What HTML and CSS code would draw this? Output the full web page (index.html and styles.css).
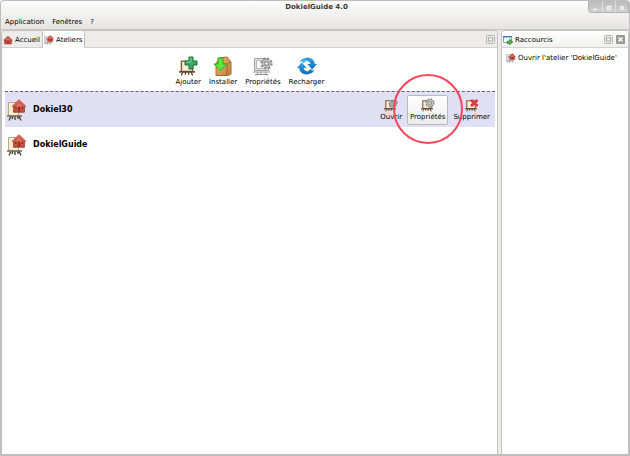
FILE: index.html
```html
<!DOCTYPE html>
<html lang="fr">
<head>
<meta charset="utf-8">
<title>DokielGuide 4.0</title>
<link rel="stylesheet" href="styles.css">
</head>
<body>
<svg class="defs" aria-hidden="true">
  <defs>
    <linearGradient id="roof" x1="0" y1="0" x2="0" y2="1"><stop offset="0" stop-color="#ef8672"/><stop offset="1" stop-color="#c4483a"/></linearGradient>
    <linearGradient id="wood" x1="0" y1="0" x2="1" y2="1"><stop offset="0" stop-color="#efbd74"/><stop offset="1" stop-color="#bd7c38"/></linearGradient>
    <linearGradient id="blue" x1="0" y1="0" x2="0" y2="1"><stop offset="0" stop-color="#35a5ea"/><stop offset="1" stop-color="#0d6db8"/></linearGradient>
  </defs>
  <symbol id="house" viewBox="0 0 20 18">
    <path d="M3 8v9h14V8l-7-6z" fill="url(#roof)" stroke="#9c3428"/>
    <path d="M1 9.500L10 1l9 8.500-2 1L10 4 3 10.500z" fill="#e2705d" stroke="#a23a2d" stroke-width=".8"/>
    <path d="M8.500 10h3v6h-3z" fill="#8e3026"/>
    <path d="M4.500 10h2.500v3H4.500zM13 10h2.500v3H13z" fill="#8e3026"/>
  </symbol>
  <symbol id="easel" viewBox="0 0 20 20">
    <path d="M5 15l-2 5M15 15l2 5M8 15v4M12 15v4" stroke="#54402f" stroke-width="1.500"/>
    <path d="M3 2h14v13H3z" fill="#f5efdc" stroke="#8b5a2e" stroke-width="1.800"/>
    <path d="M0 15.500h20" stroke="#66472b" stroke-width="2"/>
  </symbol>
  <symbol id="gear" viewBox="0 0 14 14">
    <g fill="none">
      <circle cx="7" cy="7" r="5.600" stroke="#858585" stroke-width="2" stroke-dasharray="2.200 2.198"/>
      <circle cx="7" cy="7" r="3.600" stroke="#858585" stroke-width="3"/>
      <circle cx="7" cy="7" r="3.600" stroke="#c4c4c4" stroke-width="1.600"/>
    </g>
    <circle cx="7" cy="7" r="1.800" fill="#f4f4f4" stroke="#777" stroke-width=".7"/>
  </symbol>
  <symbol id="workshop" viewBox="0 0 20 22">
    <path d="M4 17l-2 4.500M8 17v4M12 17l2 4.500M6 17l-1 3M11 17v3" stroke="#4b463d" stroke-width="1.400"/>
    <path d="M1.500 3.500h10V17h-10z" fill="#f8edcf" stroke="#b8a987"/>
    <path d="M0 17h15" stroke="#6c604e" stroke-width="1.400"/>
    <use href="#house" x="4" y="0" width="16" height="14"/>
  </symbol>
  <symbol id="workshop-mini" viewBox="0 0 20 20">
    <path d="M1 3h14v12H1z" fill="#e8e8e6" stroke="#9b9b98"/>
    <path d="M3 7h5M3 10h5M3 16l-1 3M7 16v3M12 16l1 3M1 16h14" stroke="#8e8a86" stroke-width="1.400"/>
    <use href="#house" x="5" y="0" width="15" height="14"/>
  </symbol>
  <symbol id="add" viewBox="0 0 20 20">
    <use href="#easel" x="1" y="3" width="16" height="17"/>
    <path d="M11 1h4v4h4v4h-4v4h-4V9H7V5h4z" fill="#3aa863" stroke="#16723c"/>
    <path d="M12 2h1v4H8" fill="none" stroke="#80d49c"/>
  </symbol>
  <symbol id="install" viewBox="0 0 20 20">
    <path d="M6 2l8-1 4 5v12l-3 1.500H3V8z" fill="url(#wood)" stroke="#a56b2b"/>
    <path d="M3 8h11l4-2.500M14 8v11" stroke="#935f24" stroke-width=".8" fill="none"/>
    <path d="M5 2h5v6h3.500L7.500 14.500 1 8h4z" fill="#5ee743" stroke="#2bab22"/>
  </symbol>
  <symbol id="props" viewBox="0 0 20 20">
    <path d="M1.500 2.500h14v12h-14z" fill="#e1e1e1" stroke="#a2a2a2"/>
    <path d="M3.500 4.500h9v8h-9z" fill="#fafafa" stroke="#b7b7b7"/>
    <path d="M0 16h17M5 16l-2 3.500M8 16v3M12 16l2 3.500M2 18.500h13" stroke="#929292"/>
    <use href="#gear" x="7" y="1" width="13" height="13"/>
  </symbol>
  <symbol id="reload" viewBox="0 0 20 20">
    <path d="M7.500 2.200C12 .2 17.500 3 17.800 8H20l-4.800 5.500L10.300 8h3.200c-.7-2.500-3-3.700-5-3.200z" fill="url(#blue)"/>
    <path d="M12.500 17.800C8 19.800 2.500 17 2.200 12H0l4.800-5.500L9.700 12H6.500c.7 2.500 3 3.700 5 3.200z" fill="url(#blue)"/>
    <path d="M2.500 6.500C3.500 4 5 2.700 7.500 2l1.500 3.200C7.800 5.700 7 6.300 6.500 7.300L4.800 5.200z" fill="#43b0ee"/>
    <path d="M17.500 13.500c-1 2.500-2.500 3.800-5 4.500L11 14.800c1.200-.5 2-1.100 2.500-2.100l1.700 2.100z" fill="#167bc4"/>
  </symbol>
  <symbol id="open" viewBox="0 0 14 14">
    <use href="#easel" x="0" y="1" width="12" height="13"/>
    <path d="M5 5l6-3 2.500 2L11 9H6z" fill="#aaa" stroke="#747474" stroke-width=".8"/>
  </symbol>
  <symbol id="edit" viewBox="0 0 14 14">
    <use href="#easel" x="0" y="1" width="12" height="13"/>
    <use href="#gear" x="4" y="0" width="10" height="10"/>
  </symbol>
  <symbol id="remove" viewBox="0 0 14 14">
    <use href="#easel" x="0" y="1" width="12" height="13"/>
    <path d="M6 2l6.500 6M12.500 2L6 8" stroke="#d83a44" stroke-width="2.800"/>
  </symbol>
  <symbol id="shortcut" viewBox="0 0 10 10">
    <path d="M.5 1.500h8v6h-8z" fill="#fff" stroke="#7fa6cf"/>
    <path d="M0 1h9v1.500H0z" fill="#3f78bd"/>
    <path d="M4 6h2.500V4L10 7l-3.500 3V8.500H4z" fill="#4eae43" stroke="#247b24" stroke-width=".5"/>
  </symbol>
  <symbol id="max" viewBox="0 0 9 9">
    <rect x=".5" y=".5" width="8" height="8" rx="1" fill="#e9e9e8" stroke="#b5b5b3"/>
    <rect x="2.500" y="3" width="4" height="3" fill="#fff" stroke="#a5a5a3"/>
  </symbol>
  <symbol id="close" viewBox="0 0 9 9">
    <rect width="9" height="9" rx="1" fill="#999995"/>
    <path d="M2.500 2.500l4 4M6.500 2.500l-4 4" stroke="#fff" stroke-width="1.400"/>
  </symbol>
</svg>

<div class="window">
  <header class="titlebar">
    <h1>DokielGuide 4.0</h1>
    <div class="controls">
      <button aria-label="Réduire"><svg viewBox="0 0 12 10"><path d="M4 7.500h4" stroke="#f4f4f4" stroke-width="1.500"/></svg></button>
      <button aria-label="Agrandir"><svg viewBox="0 0 12 10"><path d="M4.500 4.500h3v3h-3z" fill="none" stroke="#f4f4f4" stroke-width="1.400"/></svg></button>
      <button aria-label="Fermer"><svg viewBox="0 0 12 10"><path d="M4 4l4 4M8 4L4 8" stroke="#f4f4f4" stroke-width="1.500"/></svg></button>
    </div>
  </header>
  <nav class="menubar">
    <button>Application</button><button>Fenêtres</button><button>?</button>
  </nav>
  <main class="panes">
    <section class="pane">
      <div class="tabs">
        <button class="tab"><svg><use href="#house"/></svg>Accueil</button>
        <button class="tab active"><svg><use href="#workshop-mini"/></svg>Ateliers</button>
        <div class="tools">
          <button aria-label="Agrandir le panneau"><svg><use href="#max"/></svg></button>
        </div>
      </div>
      <div class="toolbar">
        <button><svg><use href="#add"/></svg>Ajouter</button>
        <button><svg><use href="#install"/></svg>Installer</button>
        <button><svg><use href="#props"/></svg>Propriétés</button>
        <button><svg><use href="#reload"/></svg>Recharger</button>
      </div>
      <ul class="list">
        <li class="row selected">
          <svg class="row-icon"><use href="#workshop"/></svg>
          <span class="name">Dokiel30</span>
          <div class="actions">
            <button><svg><use href="#open"/></svg>Ouvrir</button>
            <div class="marked">
              <button class="hover"><svg><use href="#edit"/></svg>Propriétés</button>
              <span class="ring"></span>
            </div>
            <button><svg><use href="#remove"/></svg>Supprimer</button>
          </div>
        </li>
        <li class="row">
          <svg class="row-icon"><use href="#workshop"/></svg>
          <span class="name">DokielGuide</span>
        </li>
      </ul>
    </section>
    <aside class="pane">
      <div class="tabs side">
        <h2><svg><use href="#shortcut"/></svg>Raccourcis</h2>
        <div class="tools">
          <button aria-label="Agrandir le panneau"><svg><use href="#max"/></svg></button>
          <button aria-label="Fermer le panneau"><svg><use href="#close"/></svg></button>
        </div>
      </div>
      <a class="shortcut" href="#atelier"><svg><use href="#workshop-mini"/></svg>Ouvrir l'atelier 'DokielGuide'</a>
    </aside>
  </main>
</div>
</body>
</html>
```
FILE: styles.css
```css
* { box-sizing: border-box; }

body {
  margin: 0;
  font: 7px/10px "DejaVu Sans", sans-serif;
  color: #000;
}

button {
  margin: 0;
  padding: 0;
  border: 0;
  background: none;
  font: inherit;
  color: inherit;
}

h1, h2 { margin: 0; font: inherit; }
svg { display: block; flex: none; }
.defs { position: absolute; width: 0; height: 0; }

.window {
  display: flex;
  flex-direction: column;
  height: 100vh;
  border: 1px solid #bdbdbd;
  border-bottom-width: 2px;
  border-radius: 4px 4px 0 0;
  background: linear-gradient(#fdfdfd, #e5e4e2 28px, #edecea 31px);
}

.titlebar {
  display: grid;
  grid-template-columns: 1fr auto 1fr;
  height: 13px;
}

.titlebar h1 {
  grid-column: 2;
  padding: 1px 0 0 3px;
  font-weight: bold;
  color: #3a3a3a;
}

.controls {
  display: flex;
  justify-self: end;
  height: 12px;
  border: 1px solid #b2b2b2;
  border-top: 0;
  border-radius: 0 0 0 4px;
  background: linear-gradient(#bababa, #d2d2d2);
}

.controls button { width: 13px; }
.controls button + button { border-left: 1px solid #dedede; }
.controls svg { width: 12px; height: 10px; }

.menubar {
  display: flex;
  gap: 8px;
  height: 16px;
  padding: 0 4px;
  border-bottom: 1px solid #c9c8c6;
}

.panes {
  display: grid;
  grid-template-columns: 1fr 128px;
  gap: 3px;
  flex: 1;
  min-height: 0;
}

.pane {
  min-width: 0;
  border: 1px solid #c3c2c0;
  border-bottom: 0;
  border-radius: 4px 4px 0 0;
  background: #fff;
}

.tabs {
  display: flex;
  align-items: center;
  height: 17px;
  padding-right: 2px;
  border-bottom: 1px solid #d2d1cf;
  border-radius: 3px 3px 0 0;
  background: #edecea;
}

.tab {
  display: flex;
  align-items: center;
  gap: 2px;
  height: 17px;
  padding: 1px 2px 0 1px;
  border-right: 1px solid #c3c2c0;
  border-radius: 0 3px 0 0;
}

.tab.active { background: #fff; }
.tab svg { width: 10px; height: 10px; }
.tools { display: flex; gap: 3px; margin-left: auto; }
.tools svg { width: 9px; height: 9px; }

.side {
  padding: 1px 3px 0 1px;
  background: linear-gradient(#fff, #f0f0ef);
}

.side h2 {
  display: flex;
  align-items: center;
  gap: 2px;
}

.side h2 svg { width: 10px; height: 10px; }

.toolbar {
  display: flex;
  justify-content: center;
  gap: 8px;
  padding: 8px 0 4px 1px;
}

.toolbar button, .actions button {
  display: flex;
  flex-direction: column;
  align-items: center;
}

.toolbar button { gap: 1px; }
.toolbar svg { width: 20px; height: 20px; }

.list {
  margin: 0 2px 0 3px;
  padding: 0;
  list-style: none;
}

.row {
  display: flex;
  align-items: center;
  height: 36px;
  padding: 0 2px;
}

.row.selected {
  border-top: 1px dashed #62626e;
  background: #e1dff4;
}

.row-icon { width: 20px; height: 22px; }
.name { margin-left: 6px; font-size: 8px; font-weight: bold; }

.actions {
  display: flex;
  gap: 5px;
  margin-left: auto;
  padding-right: 3px;
}

.actions svg { width: 14px; height: 14px; }
.actions button { height: 30px; padding-top: 3px; }
.marked { position: relative; }

.actions .hover {
  padding: 2px 2px 0;
  border: 1px solid #b9b8bd;
  border-radius: 2px;
  background: linear-gradient(#fff, #edecec);
}

.ring {
  position: absolute;
  top: -21px;
  left: 50%;
  width: 70px;
  height: 70px;
  margin-left: -35px;
  border: 2px solid #f5455c;
  border-radius: 50%;
  pointer-events: none;
}

.shortcut {
  display: flex;
  align-items: center;
  gap: 2px;
  padding: 5px 4px;
  color: inherit;
  text-decoration: none;
}

.shortcut svg { width: 10px; height: 10px; }
```
